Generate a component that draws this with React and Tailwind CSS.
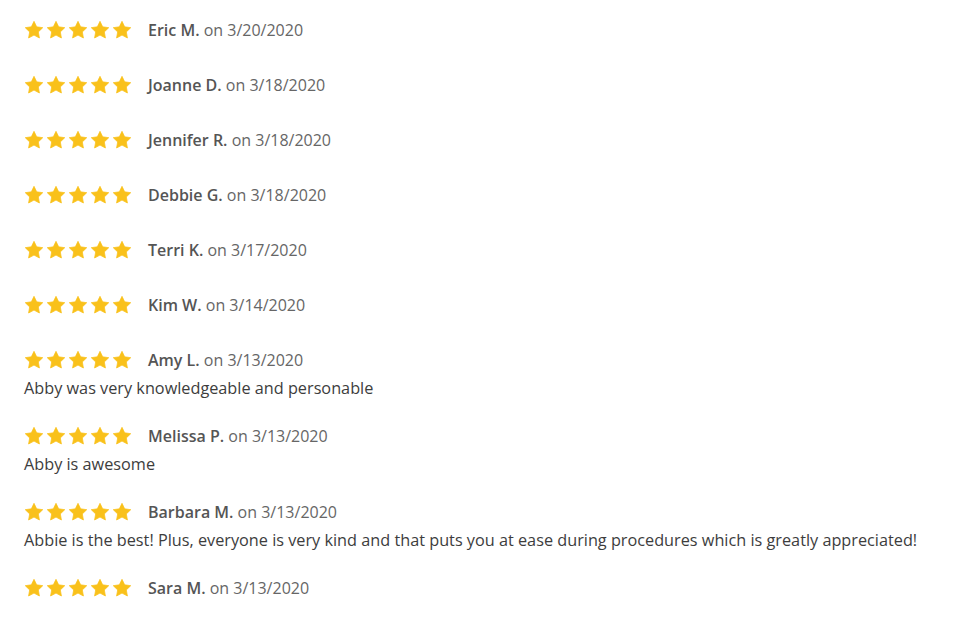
import React from "react";

const reviews = [
  { name: "Eric M.", date: "3/20/2020" },
  { name: "Joanne D.", date: "3/18/2020" },
  { name: "Jennifer R.", date: "3/18/2020" },
  { name: "Debbie G.", date: "3/18/2020" },
  { name: "Terri K.", date: "3/17/2020" },
  { name: "Kim W.", date: "3/14/2020" },
  { name: "Amy L.", date: "3/13/2020", comment: "Abby was very knowledgeable and personable" },
  { name: "Melissa P.", date: "3/13/2020", comment: "Abby is awesome" },
  {
    name: "Barbara M.",
    date: "3/13/2020",
    comment:
      "Abbie is the best! Plus, everyone is very kind and that puts you at ease during procedures which is greatly appreciated!",
  },
  { name: "Sara M.", date: "3/13/2020" },
];

function Star() {
  return (
    <svg width="20" height="20" viewBox="0 0 24 24" className="shrink-0">
      <path
        d="M12 1.6l3.2 6.6 7.3 1-5.3 5.1 1.3 7.3L12 18.1l-6.5 3.5 1.3-7.3-5.3-5.1 7.3-1z"
        fill="#f9c11b"
        stroke="#f9c11b"
        strokeWidth="0.9"
        strokeLinejoin="round"
      />
    </svg>
  );
}

export default function App() {
  return (
    <div
      className="bg-white min-h-[639px] pl-[24px] pt-[16px] text-[#555]"
      style={{ fontFamily: '"Open Sans", sans-serif' }}
    >
      {reviews.map((r, i) => (
        <div key={i} className={r.comment ? "mb-[20px]" : "mb-[27px]"}>
          <div className="flex items-center h-[28px]">
            <div className="flex gap-[2px]">
              <Star />
              <Star />
              <Star />
              <Star />
              <Star />
            </div>
            <div className="ml-[16px] text-[16px] leading-[28px]">
              <span className="font-semibold text-[#555]">{r.name}</span>{" "}
              <span className="text-[#666]">on {r.date}</span>
            </div>
          </div>
          {r.comment && (
            <div className="text-[16.25px] leading-[28px] text-[#3d3d3d]">{r.comment}</div>
          )}
        </div>
      ))}
    </div>
  );
}
